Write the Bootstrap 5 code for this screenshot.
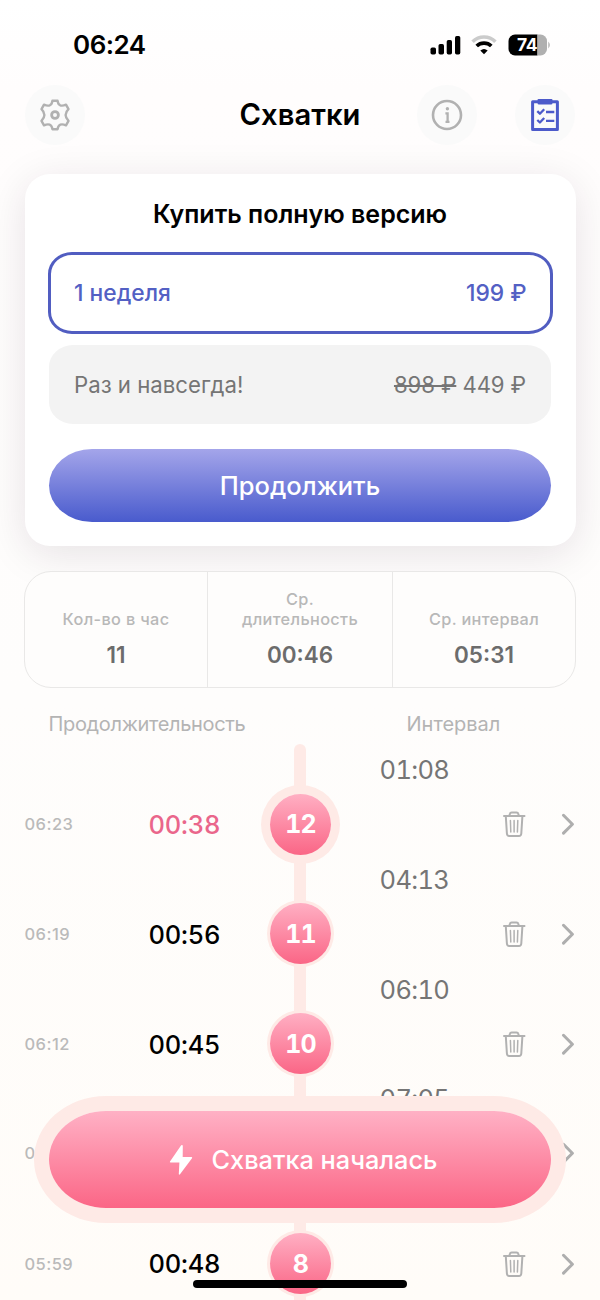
<!DOCTYPE html>
<html lang="ru">
<head>
<meta charset="utf-8">
<meta name="viewport" content="width=device-width, initial-scale=1">
<title>Схватки</title>
<link href="https://cdn.jsdelivr.net/npm/bootstrap@5.3.0/dist/css/bootstrap.min.css" rel="stylesheet">
<style>
  html, body { height: 1300px; overflow: hidden; }
  body { font-family: Inter, "Liberation Sans", sans-serif; color: #000; line-height: 1; background: linear-gradient(#fff 0, #fffdfd 90px, #fefdfc 700px, #fffcf8 1300px); }
  .screen { width: 600px; height: 1300px; overflow: hidden; }
  svg { display: block; flex: none; }
  .statusbar { height: 85px; padding: 4px 50px 0 73px; }
  .clock { font-size: 26px; font-weight: 600; letter-spacing: -.5px; }
  .topbar { height: 60px; padding: 0 25px; }
  .round-btn { width: 60px; height: 60px; background: #fafafa; border: 0; padding: 0; color: #b1b1b1; }
  .screen-title { font-size: 29.2px; font-weight: 600; padding-bottom: 1px; }
  .offer { margin: 29px 24.5px 0; height: 372px; padding: 0 24.5px; border-radius: 25px; background: #fff; box-shadow: 0 8px 42px rgba(40,20,40,.115); }
  .offer-title { font-size: 25px; font-weight: 600; height: 78px; padding-top: 2px; }
  .plan { height: 79px; padding: 2px 25px 0; border-radius: 24px / 22px; background: #f3f3f3; color: #757575; font-size: 22.2px; margin-top: 11px; }
  .plan .prices { letter-spacing: -.13px; }
  .plan.chosen { height: 82px; margin: 0 -1.5px; padding: 1px 23px 0 23.5px; background: #fff; color: #5360c4; font-weight: 500; font-size: 22.8px; border: 3px solid #515dc1; }
  .buy { height: 73px; border-radius: 43px / 36.5px; margin-top: 25px; color: #fff; font-size: 25.5px; font-weight: 500; background: linear-gradient(#a4a5ea, #495bcd); border: 0; }
  .stats { margin: 24.5px 24px 0; height: 117px; border: 1.5px solid #e9e8e7; border-radius: 27px; background: #fefdfc; }
  .stat { padding-bottom: 20px; flex: 1 1 0; }
  .stat:nth-child(2) { flex: 0 0 186px; border: solid #e9e8e7; border-width: 0 1.5px; }
  .stat-label { font-size: 16.3px; font-weight: 500; line-height: 20px; letter-spacing: .35px; color: #b8b8b8; }
  .stat-value { font-size: 22.5px; font-weight: 600; color: #6c6c6c; margin-top: 15px; }
  .heads { height: 56px; padding: 16px 0 0; font-size: 20px; color: #b4b4b4; line-height: 40px; }
  .heads > :first-child { margin-left: 48.5px; width: 358px; letter-spacing: -.33px; }
  .timeline { position: relative; }
  .timeline::before { content: ""; position: absolute; left: 294px; top: 0; width: 12px; height: 570px; border-radius: 6px 6px 0 0; background: #feeae6; }
  .entry { position: relative; height: 109.9px; }
  .gap-time, .length, .bubble { font-feature-settings: "tnum"; }
  .gap-time { height: 50px; padding-left: 379.5px; color: #757575; font-size: 25.5px; padding-top: 2px; letter-spacing: -.65px; }
  .entry-row { height: 60px; display: grid; grid-template-columns: 124px 121px 110px 1fr 49px; padding: 0 25px 0 24.5px; align-items: center; }
  .start { font-size: 16.5px; font-weight: 500; color: #bababa; letter-spacing: .45px; padding-top: 1px; }
  .length { font-size: 25.5px; font-weight: 500; letter-spacing: -.25px; padding-top: 1px; }
  .length.latest { color: #ea668b; }
  .bubble { width: 61px; height: 61px; border-radius: 50%; background: linear-gradient(#ffafc3, #fa6686); color: #fff; font-weight: 700; font-size: 25px; letter-spacing: -.8px; padding: 1px 0 0 1px; box-shadow: 0 0 0 3px #feeae6; }
  .bubble.latest { box-shadow: 0 0 0 9px #feeae6; }
  .start-btn { position: absolute; left: 49px; top: 1111px; width: 502px; height: 97px; border: 0; padding: 0 0 0 6px; border-radius: 57px / 48.5px; color: #fff; font-size: 25.3px; font-weight: 500; background: linear-gradient(#ffb1c5, #fb6686); box-shadow: 0 0 0 15px #feeae6; }
  .home-bar { position: absolute; left: 193px; top: 1280px; width: 214px; height: 8px; border-radius: 4px; background: #000; }
</style>
</head>
<body>
<svg width="0" height="0" class="position-absolute" aria-hidden="true">
  <symbol id="trash" viewBox="0 0 24 28"><g fill="none" stroke="#b1b1b1" stroke-linecap="round" stroke-linejoin="round"><path stroke-width="2" d="M2 6h20.500M3.800 6.300l1.100 17.200q.2 2.500 2.300 2.500h9.800q2.100 0 2.300-2.500L20.400 6.300M7.400 5.700l.5-1.900q.3-1.300 1.800-1.300h4.800q1.500 0 1.800 1.300l.5 1.900"/><path stroke-width="1.500" d="M8.400 10.500l.4 11.500M12.100 10.500V22M15.800 10.500L15.400 22"/></g></symbol>
  <symbol id="chev" viewBox="0 0 14 22"><path d="M2.500 2.300l8.900 8.900-8.900 8.900" fill="none" stroke="#aeaeae" stroke-width="3" stroke-linecap="round" stroke-linejoin="round"/></symbol>
</svg>
<main class="screen position-relative">
  <div class="statusbar d-flex align-items-center justify-content-between">
    <span class="clock">06:24</span>
    <div class="d-flex align-items-center">
      <svg width="31" height="20" viewBox="0 0 31 20"><rect x=".5" y="12.500" width="5.500" height="7" rx="1.700"/><rect x="8.500" y="9" width="5.500" height="10.500" rx="1.700"/><rect x="16.700" y="5" width="5.300" height="14.500" rx="1.700"/><rect x="25" y="1" width="5.300" height="18.500" rx="1.700"/></svg>
      <svg width="26" height="20" viewBox="0 0 26 20" style="margin-left:10px"><path d="M1.600 6.700a16.300 16.300 0 0 1 22.800 0" fill="none" stroke="#cbcbcb" stroke-width="3.600"/><path d="M5.700 11a10.500 10.500 0 0 1 14.600 0" fill="none" stroke="#000" stroke-width="3.700"/><path d="M13 19.200l-3.700-3.700q3.700-3 7.400 0z"/></svg>
      <svg width="42" height="22" viewBox="0 0 42 22" style="margin-left:11px"><defs><clipPath id="cell"><rect x=".5" y=".5" width="38.500" height="21" rx="6.500"/></clipPath></defs><g clip-path="url(#cell)"><path d="M0 0h29.500v22H0z"/><path d="M29.500 0H40v22H29.500z" fill="#b0b0b0"/></g><path d="M40.300 7.500q3 3.500 0 7z" fill="#b0b0b0"/><text x="19" y="17.200" text-anchor="middle" font-size="17.500" font-weight="700" fill="#fff" letter-spacing="-.5">74</text></svg>
    </div>
  </div>
  <header class="topbar d-flex align-items-center position-relative">
    <button class="round-btn rounded-circle d-flex align-items-center justify-content-center" aria-label="Настройки">
      <svg width="32" height="32" viewBox="0 0 32 32" fill="none" stroke="currentColor" stroke-width="2.400" stroke-linejoin="round"><path d="M13.400 1.800h5.200q.4 3.400 2.600 4.500 2.200.9 5.800-.6l2.500 4.500q-2.900 2.800-2.900 5.800t2.900 5.800l-2.500 4.500q-3.600-1.500-5.800-.6-2.200 1.100-2.600 4.500h-5.200q-.4-3.400-2.600-4.500-2.200-.9-5.800.6l-2.500-4.500q2.900-2.800 2.900-5.800t-2.900-5.800l2.500-4.500q3.600 1.500 5.800.6 2.200-1.100 2.600-4.500z"/><circle cx="16" cy="16" r="3.400" stroke-width="2.800"/></svg>
    </button>
    <h1 class="screen-title position-absolute start-0 end-0 text-center m-0 pe-none">Схватки</h1>
    <button class="round-btn rounded-circle d-flex align-items-center justify-content-center ms-auto" style="margin-right:38px" aria-label="Справка">
      <svg width="32" height="32" viewBox="0 0 32 32" fill="none" stroke="currentColor"><circle cx="16" cy="16" r="14" stroke-width="2.600"/><circle cx="16.400" cy="9.700" r="1.700" fill="currentColor" stroke="none"/><path d="M14.400 14.300h2.200v8M14.500 22.800h4" stroke-width="2.300"/></svg>
    </button>
    <button class="round-btn rounded-circle d-flex align-items-center justify-content-center" aria-label="Список">
      <svg width="28" height="34" viewBox="0 0 28 34" fill="none" stroke="#4c5aca" stroke-linejoin="round"><rect x="1.600" y="3.800" width="24.800" height="27.600" stroke-width="3"/><path d="M6.500 3V2q0-1 1-1h13q1 0 1 1v3Q21.500 6.500 20 6.500H8Q6.500 6.500 6.500 5z" fill="#4c5aca" stroke="none"/><path d="M6.300 13.200l2.600 2.500 4.300-4.500M6.300 22l2.600 2.500L13.200 20M15 14h8.300M15 22.800h8.300" stroke-width="2.300"/></svg>
    </button>
  </header>

  <section class="offer">
    <h2 class="offer-title m-0 d-flex align-items-center justify-content-center">Купить полную версию</h2>
    <div class="plan chosen d-flex align-items-center justify-content-between"><span>1 неделя</span><span>199 ₽</span></div>
    <div class="plan d-flex align-items-center justify-content-between"><span>Раз и навсегда!</span><span class="prices"><s>898 ₽</s> 449 ₽</span></div>
    <button class="buy w-100 d-flex align-items-center justify-content-center">Продолжить</button>
  </section>

  <section class="stats d-flex text-center">
    <div class="stat d-flex flex-column justify-content-end"><span class="stat-label">Кол-во в час</span><span class="stat-value">11</span></div>
    <div class="stat d-flex flex-column justify-content-end"><span class="stat-label">Ср.<br>длительность</span><span class="stat-value">00:46</span></div>
    <div class="stat d-flex flex-column justify-content-end"><span class="stat-label">Ср. интервал</span><span class="stat-value">05:31</span></div>
  </section>

  <div class="heads d-flex"><span>Продолжительность</span><span>Интервал</span></div>

  <section class="timeline">
    <div class="entry">
      <div class="gap-time d-flex align-items-center">01:08</div>
      <div class="entry-row"><span class="start">06:23</span><span class="length latest">00:38</span><span class="bubble latest d-flex align-items-center justify-content-center">12</span><svg class="ms-auto" width="24" height="28"><use href="#trash"/></svg><svg class="ms-auto" width="14" height="22"><use href="#chev"/></svg></div>
    </div>
    <div class="entry">
      <div class="gap-time d-flex align-items-center">04:13</div>
      <div class="entry-row"><span class="start">06:19</span><span class="length">00:56</span><span class="bubble d-flex align-items-center justify-content-center">11</span><svg class="ms-auto" width="24" height="28"><use href="#trash"/></svg><svg class="ms-auto" width="14" height="22"><use href="#chev"/></svg></div>
    </div>
    <div class="entry">
      <div class="gap-time d-flex align-items-center">06:10</div>
      <div class="entry-row"><span class="start">06:12</span><span class="length">00:45</span><span class="bubble d-flex align-items-center justify-content-center">10</span><svg class="ms-auto" width="24" height="28"><use href="#trash"/></svg><svg class="ms-auto" width="14" height="22"><use href="#chev"/></svg></div>
    </div>
    <div class="entry">
      <div class="gap-time d-flex align-items-center">07:05</div>
      <div class="entry-row"><span class="start">0</span><span></span><span></span><span></span><svg class="ms-auto" width="14" height="22"><use href="#chev"/></svg></div>
    </div>
    <div class="entry">
      <div class="gap-time"></div>
      <div class="entry-row"><span class="start">05:59</span><span class="length">00:48</span><span class="bubble d-flex align-items-center justify-content-center">8</span><svg class="ms-auto" width="24" height="28"><use href="#trash"/></svg><svg class="ms-auto" width="14" height="22"><use href="#chev"/></svg></div>
    </div>
  </section>

  <button class="start-btn d-flex align-items-center justify-content-center">
    <svg width="24" height="32" viewBox="0 0 24 32" style="margin-right:19px"><path d="M12.200 1.300L1 17.500q-.6 1.100.7 1.100h8.700l-.6 11.400q.2 1.200 1.200.2L23 14.300q.7-1.200-.7-1.300h-8.600l.1-11.200q-.4-1.500-1.600-.5z" fill="#fff"/></svg>
    <span>Схватка началась</span>
  </button>
  <div class="home-bar"></div>
</main>
<script src="https://cdn.jsdelivr.net/npm/bootstrap@5.3.0/dist/js/bootstrap.bundle.min.js"></script>
</body>
</html>
